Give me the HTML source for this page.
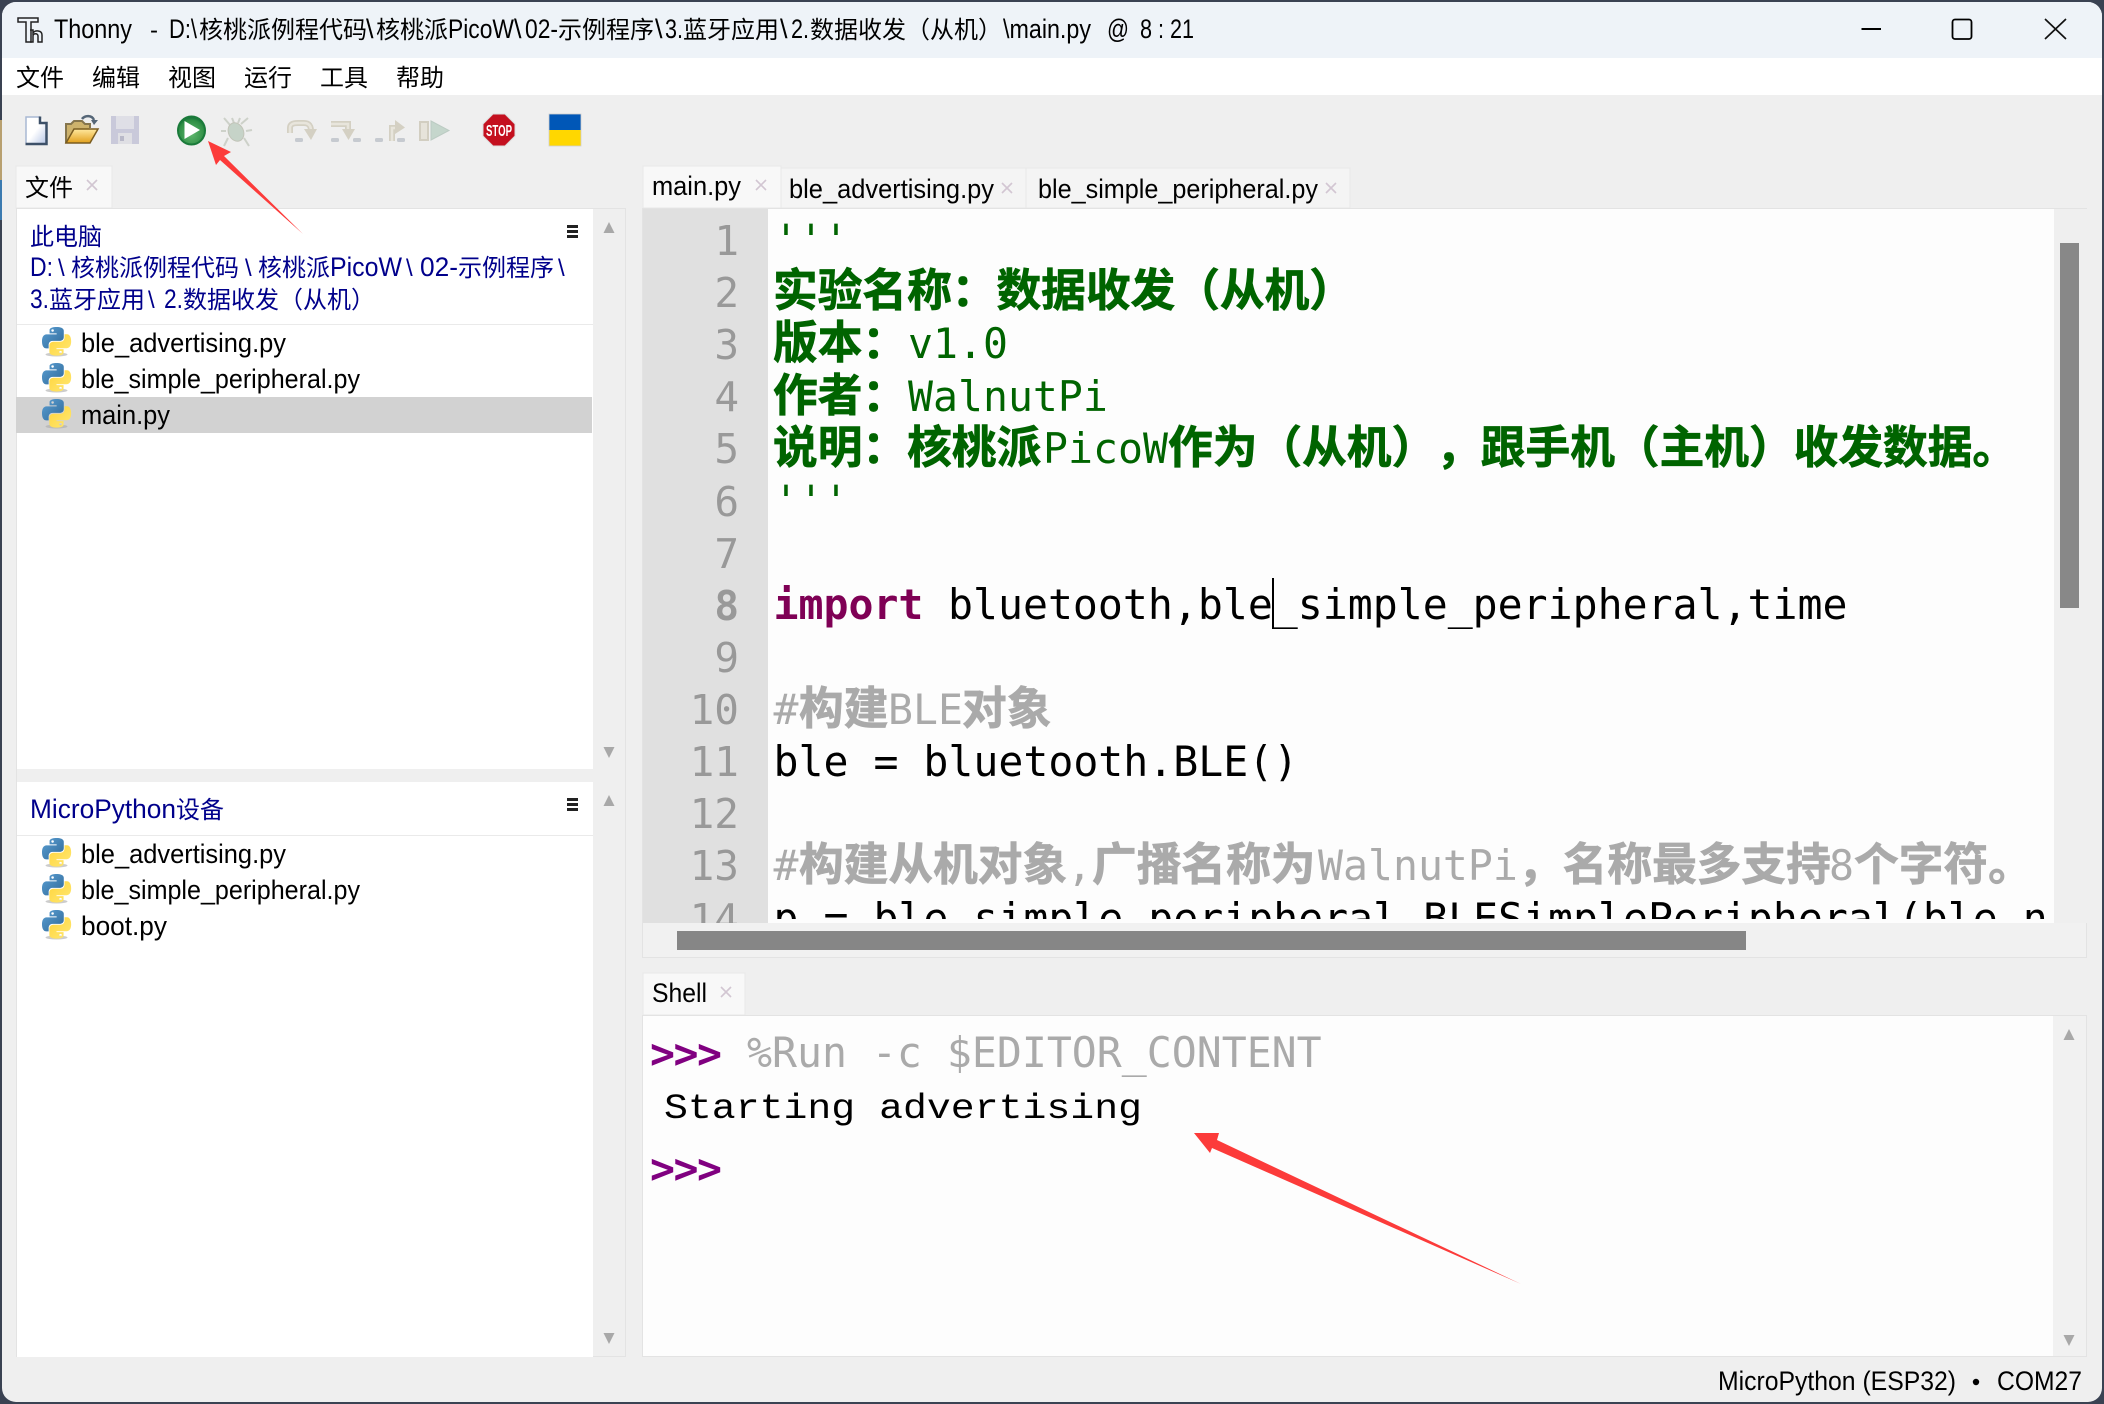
<!DOCTYPE html>
<html lang="zh-CN">
<head>
<meta charset="utf-8">
<title>Thonny</title>
<style>
html,body{margin:0;padding:0;background:#3a4252;width:2104px;height:1404px;overflow:hidden}
svg{display:block}
text{white-space:pre;font-family:"Liberation Sans","Noto Sans CJK SC",sans-serif;text-spacing-trim:space-all}
.u{font-size:27px;fill:#000}
.b{font-size:27px;fill:#00008b}
.s{font-size:24px;fill:#00008b}
.cn{font-family:"Noto Sans CJK SC","Liberation Sans",sans-serif;font-size:24px}
.ln{font-family:"DejaVu Sans Mono",monospace;font-size:41px;fill:#999;text-anchor:end}
.m{font-family:"DejaVu Sans Mono",monospace;font-size:41.5px}
.k{font-family:"Noto Sans CJK SC",sans-serif;font-size:44.7px;font-weight:700;stroke-width:.7px}
.g{fill:#006400}.y{fill:#aaa}
.k.g{stroke:#006400}.k.y{stroke:#aaa}
</style>
</head>
<body>
<svg xmlns="http://www.w3.org/2000/svg" width="2104" height="1404" viewBox="0 0 2104 1404">
<defs>
<linearGradient id="pg" x1="0" y1="0" x2="1" y2="1"><stop offset="0" stop-color="#fff"/><stop offset=".5" stop-color="#fff"/><stop offset="1" stop-color="#b9c8e6"/></linearGradient>
<linearGradient id="fg" x1="0" y1="0" x2="0" y2="1"><stop offset="0" stop-color="#ffe9a0"/><stop offset="1" stop-color="#e2a01c"/></linearGradient>
<radialGradient id="rg" cx=".5" cy=".62" r=".6"><stop offset="0" stop-color="#62b870"/><stop offset=".8" stop-color="#2f8f45"/><stop offset="1" stop-color="#14703a"/></radialGradient>
<linearGradient id="pb" x1="0" y1="0" x2="1" y2="1"><stop offset="0" stop-color="#5a9fd4"/><stop offset="1" stop-color="#306998"/></linearGradient>
<linearGradient id="py" x1="0" y1="0" x2="1" y2="1"><stop offset="0" stop-color="#ffe873"/><stop offset="1" stop-color="#ffd43b"/></linearGradient>
<g id="pyi">
<ellipse cx="14.500" cy="27.500" rx="11" ry="2" fill="#aaa" opacity=".6"/>
<g transform="scale(.265 .26)">
<path fill="url(#pb)" d="M54.9 0C26.9 0 28.6 12.1 28.6 12.1l0 12.6h26.7v3.8H18C18 28.5 0 26.4 0 54.8s15.7 27.4 15.7 27.4h9.4V69s-.5-15.7 15.5-15.7h26.6s15-.2 15-14.5V15S84.5 0 54.9 0zM40 8.5a4.8 4.8 0 1 1 0 9.6 4.8 4.8 0 0 1 0-9.6z"/>
<path fill="url(#py)" transform="rotate(180 55 55)" d="M54.9 0C26.9 0 28.6 12.1 28.6 12.1l0 12.6h26.7v3.8H18C18 28.5 0 26.4 0 54.8s15.7 27.4 15.7 27.4h9.4V69s-.5-15.7 15.5-15.7h26.6s15-.2 15-14.5V15S84.5 0 54.9 0zM40 8.5a4.8 4.8 0 1 1 0 9.6 4.8 4.8 0 0 1 0-9.6z"/>
</g>
</g>
<g id="x"><path d="M-5-5L5 5M5-5L-5 5" stroke="#d2c6d2" stroke-width="1.6" fill="none"/></g>
<g id="ham"><rect x="0" y="0" width="11" height="3" fill="#222"/><rect x="0" y="5" width="11" height="3" fill="#222"/><rect x="0" y="10" width="11" height="3" fill="#222"/></g>
<clipPath id="win"><rect x="2" y="2" width="2100" height="1400" rx="14"/></clipPath>
<clipPath id="ed"><rect x="768" y="208" width="1282" height="711"/></clipPath>
<clipPath id="gt"><rect x="643" y="208" width="125" height="715"/></clipPath>
</defs>

<rect width="2104" height="1404" fill="#3a4252"/>
<rect x="0" y="120" width="2" height="80" fill="#b8a070"/>
<rect x="0" y="180" width="2" height="40" fill="#3b7ab0"/>
<g clip-path="url(#win)">
<rect x="2" y="2" width="2100" height="1400" fill="#efefef"/>
<rect x="2" y="2" width="2100" height="56" fill="#eef3f8"/>
<rect x="2" y="58" width="2100" height="37" fill="#fff"/>
</g>

<!-- title icon -->
<g fill="none" stroke="#222" stroke-width="1.500">
<path d="M18 18H38V22H31V42H26V22H18Z"/>
<path d="M30 30H33V33C35 30 42 30 42 35V42H38V36C38 33 33 33 33 36V42H30"/>
</g>
<text class="u" x="54" y="38" textLength="78" lengthAdjust="spacingAndGlyphs">Thonny</text>
<text x="150" y="38" style="font-size:24px">-</text>
<text class="u" x="169" y="38" textLength="28" lengthAdjust="spacingAndGlyphs">D:\</text>
<text class="cn" x="199" y="38" fill="#000">核桃派例程代码</text>
<text class="u" x="366" y="38">\</text>
<text class="cn" x="376" y="38" fill="#000">核桃派</text>
<text class="u" x="448" y="38" textLength="66" lengthAdjust="spacingAndGlyphs">PicoW</text>
<text class="u" x="514" y="38">\</text>
<text class="u" x="525" y="38" textLength="33" lengthAdjust="spacingAndGlyphs">02-</text>
<text class="cn" x="558" y="38" fill="#000">示例程序</text>
<text class="u" x="655" y="38">\</text>
<text class="u" x="665" y="38" textLength="18" lengthAdjust="spacingAndGlyphs">3.</text>
<text class="cn" x="683" y="38" fill="#000">蓝牙应用</text>
<text class="u" x="780" y="38">\</text>
<text class="u" x="791" y="38" textLength="18" lengthAdjust="spacingAndGlyphs">2.</text>
<text class="cn" x="810" y="38" fill="#000">数据收发（从机）</text>
<text class="u" x="1003" y="38" textLength="88" lengthAdjust="spacingAndGlyphs">\main.py</text>
<text class="u" x="1107" y="38" textLength="22" lengthAdjust="spacingAndGlyphs">@</text>
<text class="u" x="1140" y="38" textLength="54" lengthAdjust="spacingAndGlyphs">8 : 21</text>

<!-- window controls -->
<path d="M1861.500 29H1881" stroke="#000" stroke-width="2"/>
<rect x="1952.500" y="19.500" width="19" height="19.500" rx="2.500" fill="none" stroke="#000" stroke-width="1.800"/>
<path d="M2045 19L2066 39M2066 19L2045 39" stroke="#111" stroke-width="1.700" fill="none"/>

<!-- menu -->
<text class="cn" x="16" y="86" fill="#000">文件</text>
<text class="cn" x="92" y="86" fill="#000">编辑</text>
<text class="cn" x="168" y="86" fill="#000">视图</text>
<text class="cn" x="244" y="86" fill="#000">运行</text>
<text class="cn" x="320" y="86" fill="#000">工具</text>
<text class="cn" x="396" y="86" fill="#000">帮助</text>

<!-- toolbar -->
<path d="M26 117H40L46 123V143H26Z" fill="url(#pg)"/>
<path d="M26 143V117H40" fill="none" stroke="#a9b8d4" stroke-width="1.500"/>
<path d="M40 116.500V123H46.500V144H25.500" fill="none" stroke="#3d5068" stroke-width="2.500"/>
<path d="M66 143V124H71L74 121H82L85 124H90V128" fill="#cdb26c" stroke="#85754d" stroke-width="2"/>
<path d="M66 143L74 129H98L90 143Z" fill="url(#fg)" stroke="#7a5c20" stroke-width="1.500"/>
<path d="M82 119C85 115 92 115 94 120" fill="none" stroke="#567" stroke-width="2.500"/>
<path d="M91 120H98L94 125Z" fill="#567"/>
<rect x="111" y="116" width="28" height="28" fill="#c9c9da"/>
<rect x="116" y="116" width="18" height="13" fill="#dfdfe6"/>
<rect x="118" y="133" width="14" height="11" fill="#dfdfe4"/>
<rect x="120" y="136" width="4" height="5" fill="#b8b8c8"/>

<ellipse cx="191.500" cy="130.500" rx="13.500" ry="14" fill="url(#rg)" stroke="#1a7a3a" stroke-width="2"/>
<path d="M184.500 121L200 130L184.500 139Z" fill="#fff"/>

<!-- bug -->
<g stroke="#cdd1c9" stroke-width="2" fill="none">
<path d="M230 125L224 118M226 131H221M228 138L224 146M241 124L248 118M246 131L252 130M244 138L249 146M232 118L234 123M240 118L238 123"/>
</g>
<ellipse cx="236" cy="132" rx="7.500" ry="9.500" fill="#c6d3c8" stroke="#c2c4b8" transform="rotate(-25 236 132)"/>

<!-- debug disabled -->
<g fill="none" stroke-linejoin="round">
<path d="M290 133V128C290 124 293 123 298 123H304C309 123 311 126 311 131" stroke="#d4d0c3" stroke-width="6"/>
<path d="M290 133V128C290 124 293 123 298 123H304C309 123 311 126 311 131" stroke="#e8e5dc" stroke-width="2.500"/>
</g>
<path d="M304 129H317L311 140Z" fill="#d4d0c3"/>
<rect x="295" y="138" width="8" height="4" rx="1.500" fill="#c6cad0"/>
<g fill="none">
<path d="M331 124H348V131" stroke="#d4d0c3" stroke-width="6"/>
<path d="M331 124H348V131" stroke="#e8e5dc" stroke-width="2.500"/>
</g>
<path d="M342 129H355L348.500 140Z" fill="#d4d0c3"/>
<rect x="331" y="138" width="8" height="4" rx="1.500" fill="#c6cad0"/>
<rect x="353" y="138" width="8" height="4" rx="1.500" fill="#c6cad0"/>
<g fill="none">
<path d="M392 141V128H397" stroke="#d4d0c3" stroke-width="6"/>
<path d="M392 141V128H397" stroke="#e8e5dc" stroke-width="2.500"/>
</g>
<path d="M395 120L405 127.500L395 134Z" fill="#d4d0c3"/>
<rect x="375" y="138" width="8" height="4" rx="1.500" fill="#c6cad0"/>
<rect x="397" y="138" width="8" height="4" rx="1.500" fill="#c6cad0"/>
<rect x="420" y="122" width="8" height="18" fill="#e6e3da" stroke="#d2cec1" stroke-width="2"/>
<path d="M431 121L449 130.500L431 140Z" fill="#c5d6cc" stroke="#bccbc3" stroke-width="1"/>

<!-- stop -->
<path d="M493 114H505L515 124V136L505 146H493L483 136V124Z" fill="#c4101f" stroke="#dcdcdc" stroke-width="1"/>
<text x="499" y="136" text-anchor="middle" textLength="26" lengthAdjust="spacingAndGlyphs" style="font-size:16px;font-weight:700;fill:#fff">STOP</text>
<!-- flag -->
<rect x="549" y="114" width="32" height="16" fill="#0057b7"/>
<rect x="549" y="130" width="32" height="16" fill="#ffd700"/>
<rect x="549" y="114" width="32" height="32" fill="none" stroke="#cfcfcf" stroke-width=".8"/>

<!-- left panel -->
<rect x="16" y="166" width="96" height="42" fill="#f8f8f8" stroke="#e8e8e8"/>
<text class="cn" x="25" y="196" fill="#000">文件</text>
<use href="#x" x="92" y="185"/>
<rect x="16.500" y="208.500" width="609" height="1148" fill="#efefef" stroke="#e3e3e3"/>
<rect x="17" y="209" width="576" height="560" fill="#fff"/>
<rect x="17" y="782" width="576" height="575" fill="#fff"/>
<path d="M609 222L614.500 233H603.500Z" fill="#a8a8a8"/>
<path d="M609 758L614.500 747H603.500Z" fill="#a8a8a8"/>
<path d="M609 795L614.500 806H603.500Z" fill="#a8a8a8"/>
<path d="M609 1344L614.500 1333H603.500Z" fill="#a8a8a8"/>

<use href="#ham" x="567" y="225"/>
<use href="#ham" x="567" y="798"/>

<g>
<text class="cn" x="30" y="245" fill="#00008b">此电脑</text>
<text class="b" x="30" y="276" textLength="23" lengthAdjust="spacingAndGlyphs">D:</text>
<text class="s" x="58" y="276">\</text>
<text class="cn" x="71" y="276" fill="#00008b">核桃派例程代码</text>
<text class="s" x="245" y="276">\</text>
<text class="cn" x="258" y="276" fill="#00008b">核桃派</text>
<text class="b" x="330" y="276" textLength="72" lengthAdjust="spacingAndGlyphs">PicoW</text>
<text class="s" x="406" y="276">\</text>
<text class="b" x="420" y="276" textLength="38" lengthAdjust="spacingAndGlyphs">02-</text>
<text class="cn" x="458" y="276" fill="#00008b">示例程序</text>
<text class="s" x="558" y="276">\</text>
<text class="b" x="30" y="308" textLength="19" lengthAdjust="spacingAndGlyphs">3.</text>
<text class="cn" x="49" y="308" fill="#00008b">蓝牙应用</text>
<text class="s" x="148" y="308">\</text>
<text class="b" x="164" y="308" textLength="19" lengthAdjust="spacingAndGlyphs">2.</text>
<text class="cn" x="183" y="308" fill="#00008b">数据收发（从机）</text>
</g>
<rect x="17" y="324" width="576" height="1" fill="#eaeaea"/>
<rect x="16" y="397" width="576" height="36" fill="#d2d2d2"/>
<use href="#pyi" x="42" y="327"/>
<use href="#pyi" x="42" y="363"/>
<use href="#pyi" x="42" y="399"/>
<text class="u" x="81" y="352" textLength="205" lengthAdjust="spacingAndGlyphs">ble_advertising.py</text>
<text class="u" x="81" y="388" textLength="279" lengthAdjust="spacingAndGlyphs">ble_simple_peripheral.py</text>
<text class="u" x="81" y="424" textLength="89" lengthAdjust="spacingAndGlyphs">main.py</text>

<text class="b" x="30" y="818" textLength="146" lengthAdjust="spacingAndGlyphs">MicroPython</text>
<text class="cn" x="176" y="818" fill="#00008b">设备</text>
<rect x="17" y="835" width="576" height="1" fill="#eaeaea"/>
<use href="#pyi" x="42" y="838"/>
<use href="#pyi" x="42" y="874"/>
<use href="#pyi" x="42" y="910"/>
<text class="u" x="81" y="863" textLength="205" lengthAdjust="spacingAndGlyphs">ble_advertising.py</text>
<text class="u" x="81" y="899" textLength="279" lengthAdjust="spacingAndGlyphs">ble_simple_peripheral.py</text>
<text class="u" x="81" y="935" textLength="86" lengthAdjust="spacingAndGlyphs">boot.py</text>

<!-- editor tabs -->
<rect x="781" y="168" width="245" height="40" fill="#f4f4f4" stroke="#e8e8e8"/>
<rect x="1026" y="168" width="324" height="40" fill="#f4f4f4" stroke="#e8e8e8"/>
<rect x="643" y="166" width="138" height="42" fill="#f8f8f8" stroke="#e8e8e8"/>
<text class="u" x="652" y="195" textLength="89" lengthAdjust="spacingAndGlyphs">main.py</text>
<use href="#x" x="761" y="185"/>
<text class="u" x="789" y="198" textLength="205" lengthAdjust="spacingAndGlyphs">ble_advertising.py</text>
<use href="#x" x="1007" y="188"/>
<text class="u" x="1038" y="198" textLength="280" lengthAdjust="spacingAndGlyphs">ble_simple_peripheral.py</text>
<use href="#x" x="1331" y="188"/>

<!-- editor -->
<rect x="642.500" y="208.500" width="1444" height="749" fill="#f1f1f1" stroke="#e3e3e3"/>
<rect x="643" y="209" width="125" height="714" fill="#e0e0e0"/>
<rect x="768" y="209" width="1286" height="714" fill="#fdfdfd"/>
<rect x="2054" y="209" width="33" height="714" fill="#efefef"/>
<rect x="2060" y="243" width="19" height="365" fill="#888"/>
<rect x="677" y="931" width="1069" height="19" fill="#868686"/>

<g clip-path="url(#gt)">
<text class="ln" x="739" y="255">1</text>
<text class="ln" x="739" y="307">2</text>
<text class="ln" x="739" y="359">3</text>
<text class="ln" x="739" y="411">4</text>
<text class="ln" x="739" y="463">5</text>
<text class="ln" x="739" y="516">6</text>
<text class="ln" x="739" y="568">7</text>
<text class="ln" x="739" y="620" style="font-weight:700">8</text>
<text class="ln" x="739" y="672">9</text>
<text class="ln" x="739" y="724">10</text>
<text class="ln" x="739" y="776">11</text>
<text class="ln" x="739" y="828">12</text>
<text class="ln" x="739" y="880">13</text>
<text class="ln" x="739" y="933">14</text>
</g>

<g clip-path="url(#ed)">
<text class="m g" x="773.500" y="254">'''</text>
<text class="k g" x="773" y="306">实验名称：数据收发（从机）</text>
<text class="k g" x="773" y="358">版本：</text>
<text class="m g" x="908" y="358">v1.0</text>
<text class="k g" x="773" y="411">作者：</text>
<text class="m g" x="908" y="411">WalnutPi</text>
<text class="k g" x="773" y="463">说明：核桃派</text>
<text class="m g" x="1043" y="463">PicoW</text>
<text class="k g" x="1168" y="463">作为（从机），跟手机（主机）收发数据。</text>
<text class="m g" x="773.500" y="515">'''</text>
<text class="m" x="773.500" y="619" style="font-weight:700;fill:#7f0055">import</text>
<text class="m" x="948" y="619">bluetooth,ble_simple_peripheral,time</text>
<rect x="1272" y="578" width="2" height="51" fill="#000"/>
<text class="m y" x="773.500" y="724">#</text>
<text class="k y" x="799" y="724">构建</text>
<text class="m y" x="888" y="724">BLE</text>
<text class="k y" x="962" y="724">对象</text>
<text class="m" x="773.500" y="776">ble = bluetooth.BLE()</text>
<text class="m y" x="773.500" y="880">#</text>
<text class="k y" x="799" y="880">构建从机对象</text>
<text class="m y" x="1067" y="880">,</text>
<text class="k y" x="1092" y="880">广播名称为</text>
<text class="m y" x="1318" y="880">WalnutPi</text>
<text class="k y" x="1518" y="880">，名称最多支持</text>
<text class="m y" x="1829" y="880">8</text>
<text class="k y" x="1854" y="880">个字符。</text>
<text class="m" x="773.500" y="933">p = ble_simple_peripheral.BLESimplePeripheral(ble,name)</text>
</g>

<!-- shell -->
<rect x="643" y="973" width="102" height="42" fill="#f8f8f8" stroke="#e8e8e8"/>
<text class="u" x="652" y="1002" textLength="55" lengthAdjust="spacingAndGlyphs">Shell</text>
<use href="#x" x="726" y="992"/>
<rect x="642.500" y="1015.500" width="1444" height="341" fill="#f1f1f1" stroke="#e3e3e3"/>
<rect x="643" y="1016" width="1410" height="340" fill="#fdfdfd"/>
<path d="M2069 1029L2074.500 1040H2063.500Z" fill="#a8a8a8"/>
<path d="M2069 1346L2074.500 1335H2063.500Z" fill="#a8a8a8"/>
<text class="m" x="650" y="1068" style="font-weight:700;fill:#800080" textLength="72" lengthAdjust="spacing">&gt;&gt;&gt;</text>
<text class="m y" x="747" y="1067">%Run -c $EDITOR_CONTENT</text>
<text x="664" y="1118" textLength="478" lengthAdjust="spacingAndGlyphs" style="font-family:'Liberation Mono',monospace;font-size:35px;fill:#000">Starting advertising</text>
<text class="m" x="650" y="1183" style="font-weight:700;fill:#800080" textLength="72" lengthAdjust="spacing">&gt;&gt;&gt;</text>

<!-- status -->
<text class="u" x="1718" y="1390" textLength="238" lengthAdjust="spacingAndGlyphs">MicroPython (ESP32)</text>
<circle cx="1976" cy="1382" r="3.200" fill="#000"/>
<text class="u" x="1997" y="1390" textLength="85" lengthAdjust="spacingAndGlyphs">COM27</text>

<!-- annotation arrows -->
<path d="M208 141L231 152L224 156L303 234L220 160L216 165Z" fill="#fc3b3a"/>
<path d="M1194 1133L1219 1133L1217 1140L1521 1284L1212 1148L1210 1153Z" fill="#fc3b3a"/>
</svg>
</body>
</html>
